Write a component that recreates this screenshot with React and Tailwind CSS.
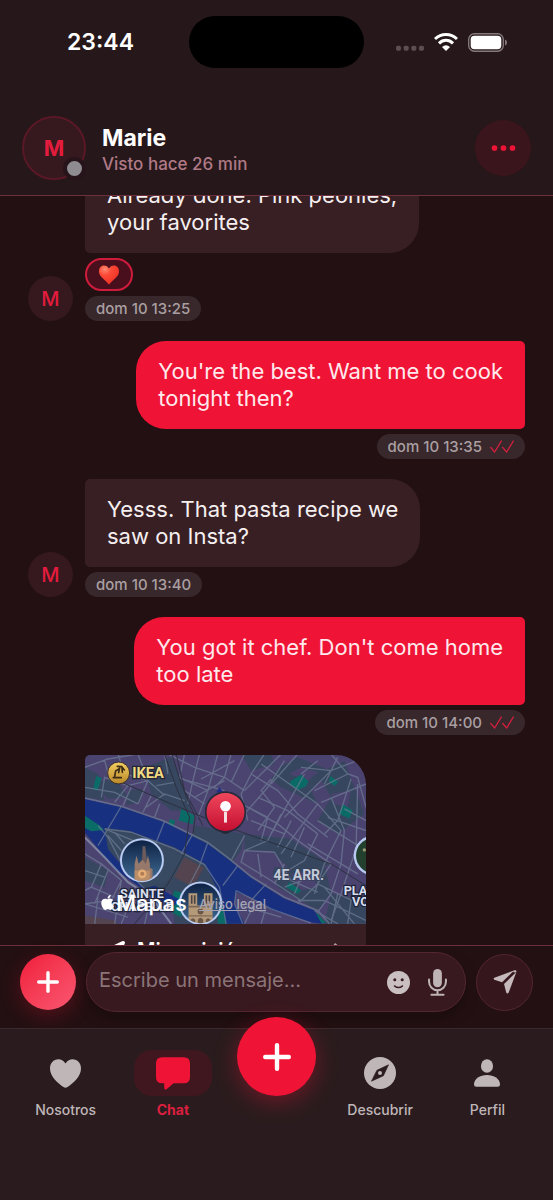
import { useState } from "react";
import { FaLocationArrow, FaApple, FaChevronRight } from "react-icons/fa";

const messages = [
    {
        id: 1,
        text: "Already done. Pink peonies,\nyour favorites",
        time: "dom 10 13:25",
        mine: false,
        liked: true,
    },
    {
        id: 2,
        text: "You're the best. Want me to cook\ntonight then?",
        time: "dom 10 13:35",
        mine: true,
    },
    {
        id: 3,
        text: "Yesss. That pasta recipe we\nsaw on Insta?",
        time: "dom 10 13:40",
        mine: false,
    },
    {
        id: 4,
        text: "You got it chef. Don't come home\ntoo late",
        time: "dom 10 14:00",
        mine: true,
    },
];

function WifiIcon() {
    return (
        <svg viewBox="0 0 72 54" className="w-6 h-[18px]" fill="none" stroke="#fff" strokeWidth="9">
            <path d="M3 18C22 0 50 0 69 18" />
            <path d="M15 31C27 19 45 19 57 31" />
            <path d="M24 42Q36 31 48 42L36 54Z" fill="#fff" stroke="none" />
        </svg>
    );
}

function BatteryIcon() {
    return (
        <svg viewBox="0 0 116 56" className="w-[39px] h-[19px]">
            <rect x="2" y="2" width="103" height="52" rx="17" fill="none" stroke="#85797b" strokeWidth="4" />
            <rect x="8" y="8" width="91" height="40" rx="11" fill="#fff" />
            <path d="M110 19Q116 21 116 28Q116 35 110 37Z" fill="#85797b" />
        </svg>
    );
}

function PlusIcon({ className }) {
    return (
        <svg viewBox="0 0 64 64" className={className} stroke="#fff" strokeWidth="10" strokeLinecap="round">
            <path d="M32 5V59M5 32H59" />
        </svg>
    );
}

function DoubleCheck() {
    return (
        <svg viewBox="0 0 72 39" className="w-6 h-[13px]" fill="none" stroke="#d5203e" strokeWidth="4" strokeLinecap="round" strokeLinejoin="round">
            <path d="M2 22L14 36L34 3M38 22L50 36L70 3" />
        </svg>
    );
}

function RedHeart() {
    return (
        <svg viewBox="0 0 94 90" className="w-5 h-5">
            <defs>
                <radialGradient id="heart" cx="0.3" cy="0.2" r="0.9">
                    <stop offset="0" stopColor="#ff8a72" />
                    <stop offset="0.35" stopColor="#fc4a38" />
                    <stop offset="1" stopColor="#ef2c22" />
                </radialGradient>
            </defs>
            <path
                fill="url(#heart)"
                d="M47 14C40 3 31 0 24 0C9 0 0 12 0 28C0 54 30 66 47 90C64 66 94 54 94 28C94 12 85 0 70 0C63 0 54 3 47 14Z"
            />
        </svg>
    );
}

function SmileIcon() {
    return (
        <svg viewBox="0 0 68 68" className="w-[23px] h-[23px]">
            <circle cx="34" cy="34" r="34" fill="#c9bfc1" />
            <circle cx="23" cy="26" r="4.5" fill="#38191f" />
            <circle cx="45" cy="26" r="4.5" fill="#38191f" />
            <path d="M22 44Q34 54 46 44" fill="none" stroke="#38191f" strokeWidth="4" strokeLinecap="round" />
        </svg>
    );
}

function MicIcon() {
    return (
        <svg viewBox="0 0 56 80" className="w-[19px] h-[27px]" fill="none" stroke="#beb3b5" strokeWidth="6" strokeLinecap="round">
            <rect x="15" y="0" width="26" height="54" rx="13" fill="#beb3b5" stroke="none" />
            <path d="M3 31V38A25 25 0 0 0 53 38V31M28 64V76M10 76H46" />
        </svg>
    );
}

function PlaneIcon() {
    return (
        <svg viewBox="0 0 72 74" className="w-6 h-6" fill="#c5b9bb">
            <path d="M65 1L3 24Q-1 27 3 30L27 38Z" />
            <path d="M71 6L33 43L40 70Q43 75 47 70L71 6Z" />
            <path d="M65 1Q72-1 71 6L68 8L60 6Z" />
        </svg>
    );
}

function HeartIcon() {
    return (
        <svg viewBox="0 0 94 87" className="w-[31px] h-[29px]" fill="currentColor">
            <path d="M47 13C41 3 33 0 26 0C10 0 0 12 0 28C0 52 24 73 42 85Q47 88 52 85C70 73 94 52 94 28C94 12 84 0 68 0C61 0 53 3 47 13Z" />
        </svg>
    );
}

function ChatIcon() {
    return (
        <svg viewBox="0 0 103 99" className="w-[34px] h-[33px]" fill="currentColor">
            <path d="M19 0H84Q103 0 103 19V60Q103 79 84 79H53L32 97Q25 101 25 93V79H19Q0 79 0 60V19Q0 0 19 0Z" />
        </svg>
    );
}

function CompassIcon() {
    return (
        <svg viewBox="0 0 94 94" className="w-8 h-8" fill="currentColor">
            <circle cx="47" cy="47" r="47" />
            <path d="M72 23L57 55L22 71L38 39Z" fill="#2b1c1f" stroke="#2b1c1f" strokeWidth="2" strokeLinejoin="round" />
            <circle cx="47" cy="47" r="6" />
        </svg>
    );
}

function PersonIcon() {
    return (
        <svg viewBox="0 0 77 82" className="w-[26px] h-7" fill="currentColor">
            <ellipse cx="38.5" cy="20" rx="18" ry="20" />
            <path d="M0 75C0 58 18 47 38.5 47C59 47 77 58 77 75Q77 82 70 82H7Q0 82 0 75Z" />
        </svg>
    );
}

function CityMap() {
    return (
        <svg viewBox="1 3 844 507" className="block w-full" fontFamily="Roboto, sans-serif">
            <defs>
                <linearGradient id="night" x1="0" y1="0" x2="0" y2="1">
                    <stop offset="0" stopColor="#0e2244" />
                    <stop offset="1" stopColor="#3f6a92" />
                </linearGradient>
                <linearGradient id="pin" x1="0" y1="0" x2="0" y2="1">
                    <stop offset="0" stopColor="#f0475c" />
                    <stop offset="1" stopColor="#c40f32" />
                </linearGradient>
                <linearGradient id="gold" x1="0" y1="0" x2="0" y2="1">
                    <stop offset="0" stopColor="#f3cf62" />
                    <stop offset="1" stopColor="#b98828" />
                </linearGradient>
                <clipPath id="chapel"><circle cx="172" cy="319" r="62" /></clipPath>
                <clipPath id="cathedral"><circle cx="348" cy="448" r="60" /></clipPath>
            </defs>
            <rect width="860" height="520" fill="#4b4470" />

            {/* darker blocks */}
            <g fill="#37475f">
                <path d="M0 40L40 60L60 140L0 130Z" />
                <path d="M30 90L90 70L130 130L70 135Z" />
                <path d="M130 110L175 105L165 145L125 155Z" />
                <path d="M180 40L260 10L290 80L320 170L260 170L200 120Z" />
                <path d="M330 215L480 240L470 290L440 330L320 260Z" />
                <path d="M480 240L620 255L740 335L610 340L560 290L480 290Z" />
                <path d="M585 40L640 10L740 50L680 110L700 150L590 100L560 75Z" />
                <path d="M700 60L780 20L800 75L840 180L760 240L700 200L740 130Z" />
                <path d="M600 340L720 330L740 420L700 470L580 400L560 340Z" />
                <path d="M470 0L560 0L570 30L500 50Z" />
                <path d="M20 215L60 215L130 215L300 280L430 380L440 510L270 510L260 410L180 410L70 285Z" />
                <path d="M0 310L70 350L60 400L0 380Z" />
                <path d="M740 420L845 440L845 510L720 510Z" />
            </g>
            <g fill="#4b4470">
                <path d="M615 60L650 40L700 55L670 80Z" />
                <path d="M490 300L560 295L570 350L520 370L480 330Z" />
                <path d="M740 120L800 110L790 160L750 150Z" />
                <path d="M620 360L680 350L700 400L650 410Z" />
            </g>

            {/* parks */}
            <g fill="#0b6b66">
                <path d="M35 66L52 72L38 110L25 105Z" />
                <path d="M290 165L330 185L325 212L283 200Z" />
                <path d="M255 195L272 200L266 220L251 216Z" />
                <path d="M620 80L650 62L672 82L665 97L640 108L615 90Z" />
                <path d="M738 66L762 84L750 96L734 82Z" />
                <path d="M775 150L805 170L795 194L765 180Z" />
                <path d="M615 385L650 410L640 420L605 400Z" />
                <path d="M270 410L300 420L290 490L250 470Z" />
                <path d="M400 455L435 470L440 510L400 510Z" />
                <path d="M600 450L700 480L725 508L690 505Z" />
            </g>

            {/* river */}
            <path d="M0 135L110 160L240 205L370 270L430 315L500 372L600 435L690 470L712 510L680 505L560 468L500 430L455 415L450 450L480 510L425 510L405 420L360 330L270 280L130 230L60 222L70 285L120 345L240 412L290 440L260 460L180 410L90 345L0 235Z" fill="#17307f" />
            <path d="M0 185L45 215L58 228L20 232L0 222Z" fill="#0b6b66" />
            <path d="M62 232L130 240L270 292L340 340L240 385L180 405L120 345Z" fill="#384a61" />
            <path d="M300 310L358 342L325 398L268 370Z" fill="#53444f" />
            <path d="M455 415L560 468L610 510L480 510Z" fill="#4b4470" />
            <path d="M0 485L90 500L100 512L0 512Z" fill="#53444f" />

            {/* streets */}
            <g fill="none" stroke="#74829a" strokeWidth="4" opacity="0.65">
                <path d="M0 132L110 157L240 202L370 266L430 311L500 368L600 430L700 470L735 510" strokeWidth="5" />
                <path d="M60 225L140 235L270 285L360 332L405 400L425 510" />
                <path d="M455 410L560 465L680 508M455 410L450 450L475 510M470 455L590 490M510 450L480 510M545 460L530 510" />
                <path d="M110 157L40 275M240 202L205 290M370 266L345 335L290 440M460 335L415 395M325 240L290 300M545 390L500 440" />
                <path d="M60 225L150 262M70 245L110 290M90 235L120 270M40 215L70 250L120 345L180 405" />
                <path d="M0 250L60 310L130 385L200 430L260 510" strokeWidth="6" stroke="#9aa6bb" />
                <path d="M0 40L70 15L160 0M0 100L90 115L160 150M50 130L60 70L130 95L90 145M100 0L120 60L190 80L160 150M130 95L190 80L240 125M60 20L75 75M160 0L190 80M185 160L240 120L300 140M225 150L210 190M140 100L115 155M200 125L175 175M240 0L250 60M215 95L270 85" />
                <path d="M250 0L330 40L420 70L480 110M300 0L285 70L370 110M345 0L325 80L310 150M400 0L370 110L340 190M440 0L420 70L390 100M480 0L440 85M350 75L450 20M330 130L420 80M540 0L500 60L470 120L490 200" />
                <path d="M290 75L420 110M300 110L360 150M480 110L560 30L590 0M500 60L580 110L640 180L730 250M560 75L530 110L570 160L520 230M530 30L700 150L770 230M600 20L550 100L480 180M640 0L560 90M660 60L610 150L560 240M700 150L640 230L590 300M740 50L660 130L600 190M490 160L580 210L640 260L740 330" />
                <path d="M520 130L610 170L700 240M500 200L600 240M470 150L550 190L530 260M590 180L550 260L480 290M620 200L580 280M660 220L620 310M700 240L660 320L610 350M770 230L720 330L690 420" />
                <path d="M650 40L740 50L845 10M740 0L790 60L820 70L845 160M700 20L650 60M690 110L790 60M710 145L845 90M730 190L845 230M740 130L780 230L770 330M800 75L760 200L720 240M820 90L815 300M760 10L720 90M780 165L845 200M700 200L845 290M670 270L820 360M740 330L700 390L640 450M770 330L740 420L700 475M810 300L770 420L740 500" />
                <path d="M480 245L440 320M480 290L570 295L620 380L700 415M480 290L470 325L560 380L650 440M520 300L530 370M600 330L570 390M660 350L630 420M600 400L680 370M640 440L720 440L845 500M700 390L845 460M760 420L740 510M800 440L790 510M690 470L760 510M720 400L810 510" />
                <path d="M0 300L50 330L20 400L0 410M50 330L110 380L80 440L0 450M20 400L90 430M70 350L30 450M0 350L60 370M110 380L90 510M0 450L130 490M150 410L110 510M200 430L180 510M130 440L230 470M40 430L30 510" />
            </g>
            {/* rail lines */}
            <g fill="none" stroke="#2b303f" strokeWidth="3">
                <path d="M240 0L275 100L315 190L300 300L250 390L150 510" />
                <path d="M262 0L290 90L332 190L325 240" />
                <path d="M275 0L300 110L355 215M100 80L260 150L430 220L600 280L740 330L845 395" />
            </g>
            <path d="M395 115L405 100L418 118Z" fill="#202e86" />

            {/* ikea */}
            <circle cx="102" cy="57" r="33" fill="url(#gold)" stroke="#352c2c" strokeWidth="3" />
            <path d="M86 71H110M90 68L93 51L104 44M98 37L111 38L119 48M105 42L102 56M112 40L113 55" fill="none" stroke="#3d2b15" strokeWidth="5" strokeLinecap="round" />
            <text x="143" y="73" fontSize="44" fontWeight="700" fill="#f0da82" stroke="#252637" strokeWidth="8" paintOrder="stroke">IKEA</text>

            {/* location pin */}
            <path d="M395 220Q423 260 451 220Z" fill="#252a3a" />
            <circle cx="423" cy="174" r="62" fill="#252a3a" />
            <circle cx="423" cy="174" r="57" fill="url(#pin)" />
            <circle cx="423" cy="157" r="16" fill="#fff" />
            <path d="M423 174V206" stroke="#f6dfe3" strokeWidth="9" />

            {/* sainte-chapelle */}
            <circle cx="172" cy="319" r="66" fill="#b9cbf2" />
            <circle cx="172" cy="319" r="60" fill="url(#night)" />
            <g clipPath="url(#chapel)">
                <path d="M172 330L174 277L182 277L188 330Z" fill="#6d5b5c" />
                <path d="M150 385V330L156 305L162 330L173 318L184 330L190 305L196 330V342L204 346V385Z" fill="#96796a" />
                <path d="M150 385V350H196V385Z" fill="#b98e68" />
                <circle cx="173" cy="360" r="13" fill="#e5ae76" />
                <circle cx="173" cy="360" r="6" fill="#b07c56" />
            </g>

            {/* notre-dame */}
            <circle cx="348" cy="448" r="65" fill="#b9cbf2" />
            <circle cx="348" cy="448" r="59" fill="url(#night)" />
            <g clipPath="url(#cathedral)">
                <path d="M312 515V418H338V455H358V418H384V515Z" fill="#b59a79" />
                <path d="M319 424H324V450H319ZM328 424H333V450H328ZM363 424H368V450H363ZM372 424H377V450H372Z" fill="#4a4245" />
                <path d="M312 456H384V461H312ZM312 484H384V488H312Z" fill="#7d6956" />
                <circle cx="348" cy="473" r="9" fill="#6c5747" />
                <path d="M318 515V498Q325 488 332 498V515ZM340 515V498Q348 486 356 498V515ZM364 515V498Q371 488 378 498V515Z" fill="#6c5747" />
            </g>

            {/* place des vosges */}
            <circle cx="868" cy="305" r="60" fill="#b9cbf2" />
            <circle cx="868" cy="305" r="53" fill="#23402f" />
            <circle cx="840" cy="288" r="5" fill="#9a9a70" />

            <g fontWeight="700" fill="#d7deee" stroke="#1f2438" strokeWidth="8" paintOrder="stroke">
                <text x="172" y="434" fontSize="38" textAnchor="middle">SAINTE</text>
                <text x="172" y="471" fontSize="38" textAnchor="middle">CHAPELLE</text>
                <text x="567" y="377" fontSize="42" fill="#c3cad9" stroke="#37405a" strokeWidth="5">4E ARR.</text>
                <text x="778" y="423" fontSize="38">PLACE</text>
                <text x="803" y="458" fontSize="38">VOSGES</text>
            </g>
        </svg>
    );
}

function Stamp({ time, mine }) {
    return (
        <div className="h-[25px] px-[11px] flex items-center gap-2 rounded-full bg-[#38272b] text-[#a99fa1] text-[15px] leading-5 font-medium">
            {time}
            {mine && <DoubleCheck />}
        </div>
    );
}

function SmallAvatar() {
    return (
        <div className="w-[45px] h-[45px] shrink-0 rounded-full bg-[#35191f] text-[#e31c3d] text-[20px] leading-6 font-medium flex items-center justify-center">
            M
        </div>
    );
}

function Message({ message }) {
    const { text, time, mine, liked } = message;

    if (mine) {
        return (
            <div className="flex flex-col items-end gap-[5px]">
                <p className="bg-[#ef1436] text-[#ffe9ec] rounded-l-[30px] rounded-r-[5px] px-[22px] py-[17px] text-[22px] leading-[27px] whitespace-pre-line">
                    {text}
                </p>
                <Stamp time={time} mine />
            </div>
        );
    }

    return (
        <div className="flex items-end gap-3">
            <SmallAvatar />
            <div className="flex flex-col items-start gap-[5px]">
                <p className="bg-[#381f24] text-[#f5eff0] rounded-l-[5px] rounded-r-[30px] px-[22px] py-[17px] text-[22px] leading-[27px] whitespace-pre-line">
                    {text}
                </p>
                {liked && (
                    <button aria-label="Me encanta" className="w-12 h-[33px] rounded-full border-2 border-[#cf1c3c] bg-[#4a0f1c] flex items-center justify-center">
                        <RedHeart />
                    </button>
                )}
                <Stamp time={time} />
            </div>
        </div>
    );
}

function LocationMessage() {
    return (
        <div className="pl-[57px]">
            <div className="w-[281px] rounded-l-[5px] rounded-r-[30px] bg-[#381f24] overflow-hidden">
                <div className="relative">
                    <CityMap />
                    <div className="absolute left-[14px] bottom-[7px] flex items-center text-white text-[22px] leading-7 font-medium">
                        <FaApple className="w-[17px] h-[17px]" />
                        Mapas
                    </div>
                    <a href="#legal" className="absolute left-[114px] bottom-[10px] text-[#a3a3b4] text-[13px] leading-5 font-medium underline">
                        Aviso legal
                    </a>
                </div>
                <div className="flex items-center gap-3 px-[22px] py-3 text-white">
                    <FaLocationArrow className="w-[18px] h-[18px]" />
                    <span className="flex-1 text-[20px] leading-7 font-semibold">Mi posición</span>
                    <FaChevronRight className="w-3 h-4 text-[#a99fa1]" />
                </div>
            </div>
        </div>
    );
}

function Header() {
    return (
        <header className="shrink-0 bg-[#26171a] border-b border-[#6b303b] pt-4">
            <div className="grid grid-cols-[1fr_175px_1fr] items-center h-[52px]">
                <span className="pl-3 text-center text-white text-[23px] leading-7 font-semibold">23:44</span>
                <div className="h-[52px] rounded-full bg-black" />
                <div className="pr-[14px] flex items-center justify-center gap-[10px]">
                    <svg viewBox="0 0 84 54" className="w-7 h-[18px]" fill="#5c4f52">
                        <rect x="0" y="38" width="15" height="15" rx="5" />
                        <rect x="23" y="38" width="15" height="15" rx="5" />
                        <rect x="46" y="38" width="15" height="15" rx="5" />
                        <rect x="69" y="38" width="15" height="15" rx="5" />
                    </svg>
                    <WifiIcon />
                    <BatteryIcon />
                </div>
            </div>
            <div className="mt-12 px-[22px] pb-[15px] flex items-center gap-4">
                <div className="relative w-16 h-16 shrink-0 rounded-full border-2 border-[#5a1826] bg-[#35191f] text-[#e31c3d] text-[22px] leading-7 font-bold flex items-center justify-center">
                    M
                    <span className="absolute right-[-2px] bottom-[-2px] w-[23px] h-[23px] rounded-full border-4 border-[#26141a] bg-[#8f8c91]" />
                </div>
                <div className="flex-1 pt-1">
                    <h1 className="text-white text-[23px] leading-7 font-bold">Marie</h1>
                    <p className="text-[#b07a86] text-[17px] leading-6 font-medium">Visto hace 26 min</p>
                </div>
                <button aria-label="Opciones" className="w-14 h-14 rounded-full bg-[#3b151c] flex items-center justify-center">
                    <svg viewBox="0 0 75 19" className="w-[25px] h-[6px]" fill="#ef1436">
                        <circle cx="9" cy="9.5" r="9" />
                        <circle cx="37.5" cy="9.5" r="9" />
                        <circle cx="66" cy="9.5" r="9" />
                    </svg>
                </button>
            </div>
        </header>
    );
}

function Composer() {
    const [draft, setDraft] = useState("");

    return (
        <form
            onSubmit={(e) => e.preventDefault()}
            className="shrink-0 border-t border-[#6b303b] bg-[#231012] px-5 pt-[6px] pb-4 flex items-center gap-[10px]"
        >
            <button type="button" aria-label="Adjuntar" className="w-14 h-14 shrink-0 rounded-full bg-linear-to-br from-[#f0183a] to-[#fa5571] shadow-[0_6px_20px_rgba(239,20,54,0.25)] flex items-center justify-center">
                <PlusIcon className="w-[22px] h-[22px]" />
            </button>
            <div className="flex-1 min-w-0 h-[60px] rounded-full border border-[#54262f] bg-[#38191f] shadow-[0_6px_14px_rgba(0,0,0,0.25)] pl-3 pr-[18px] flex items-center gap-[18px]">
                <input
                    type="text"
                    aria-label="Mensaje"
                    placeholder="Escribe un mensaje..."
                    value={draft}
                    onChange={(e) => setDraft(e.target.value)}
                    className="flex-1 min-w-0 pb-1 bg-transparent text-white placeholder:text-[#8b7478] text-[20px] leading-7 outline-none"
                />
                <button type="button" aria-label="Emojis">
                    <SmileIcon />
                </button>
                <button type="button" aria-label="Grabar audio">
                    <MicIcon />
                </button>
            </div>
            <button aria-label="Enviar" className="w-[57px] h-[57px] shrink-0 rounded-full border border-[#54262f] bg-[#35161c] flex items-center justify-center">
                <PlaneIcon />
            </button>
        </form>
    );
}

function NavItem({ label, active, children }) {
    return (
        <a href={"#" + label.toLowerCase()} className={`flex flex-col items-center gap-1 ${active ? "text-[#ef1436]" : "text-[#bfb6b8]"}`}>
            <span className={`w-[78px] h-[46px] rounded-[18px] flex items-center justify-center ${active ? "bg-[#40171f]" : ""}`}>
                {children}
            </span>
            <span className={`text-[14px] leading-5 ${active ? "font-bold text-[#dc1f3f]" : "font-medium"}`}>{label}</span>
        </a>
    );
}

function BottomNav() {
    return (
        <nav className="shrink-0 border-t border-[#3b282c] bg-[#2a1c1e] px-3 pt-[21px] pb-20 grid grid-cols-[1fr_1fr_100px_1fr_1fr]">
            <NavItem label="Nosotros">
                <HeartIcon />
            </NavItem>
            <NavItem label="Chat" active>
                <ChatIcon />
            </NavItem>
            <div className="flex justify-center">
                <button aria-label="Crear" className="w-[79px] h-[79px] shrink-0 -mt-[33px] rounded-full bg-[#ef1436] shadow-[0_6px_22px_rgba(239,20,54,0.35)] flex items-center justify-center">
                    <PlusIcon className="w-7 h-7" />
                </button>
            </div>
            <NavItem label="Descubrir">
                <CompassIcon />
            </NavItem>
            <NavItem label="Perfil">
                <PersonIcon />
            </NavItem>
        </nav>
    );
}

function App() {
    return (
        <div className="h-dvh flex flex-col bg-[#231012] font-[Inter,sans-serif]">
            <Header />
            <main className="flex-1 min-h-0 overflow-hidden px-7">
                <div className="-mt-[31px] flex flex-col gap-5">
                    {messages.map((message) => (
                        <Message key={message.id} message={message} />
                    ))}
                    <LocationMessage />
                </div>
            </main>
            <Composer />
            <BottomNav />
        </div>
    );
}

export default App;
